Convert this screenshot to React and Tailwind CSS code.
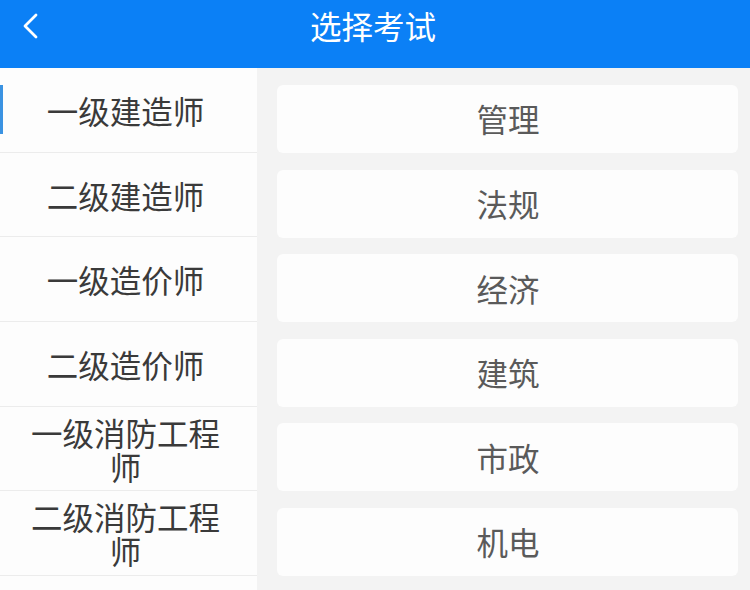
import React, { useState } from 'react';

const exams = ['一级建造师', '二级建造师', '一级造价师', '二级造价师', '一级消防工程师', '二级消防工程师', ''];
const subjects = ['管理', '法规', '经济', '建筑', '市政', '机电'];

const App = () => {
    const [active, setActive] = useState(0);

    return (
        <div
            className="w-[750px] h-[590px] overflow-hidden flex flex-col bg-[#f3f3f3]"
            style={{ fontFamily: '"Noto Sans CJK SC", "Noto Sans", sans-serif' }}
        >
            {/* 顶部标题栏 */}
            <div className="h-[68px] shrink-0 bg-[#0b80f6] flex items-center pb-[16px] relative">
                <button className="w-[60px] flex items-center justify-center">
                    <svg width="20" height="26" viewBox="0 0 20 26" fill="none">
                        <path d="M16 2 L5 13 L16 24" stroke="#ffffff" strokeWidth="2.8" strokeLinecap="round" strokeLinejoin="round" />
                    </svg>
                </button>
                <h1 className="flex-1 text-center text-white text-[31.5px] leading-none mr-[60px] ml-[-4px]">选择考试</h1>
            </div>

            <div className="flex flex-1 min-h-0">
                {/* 左侧考试列表 */}
                <div className="w-[257px] shrink-0 bg-[#fdfdfd] flex flex-col">
                    {exams.map((name, index) => (
                        <div
                            key={index}
                            onClick={() => setActive(index)}
                            className="relative h-[84.7px] shrink-0 border-b border-[#ececec] flex items-center justify-center pl-[26px] pr-[32px] text-center text-[#3a3a3a] text-[31.5px] leading-[34px]"
                        >
                            {active === index && (
                                <span className="absolute left-0 top-[17px] w-[3px] h-[49px] bg-[#3b93e2]"></span>
                            )}
                            {name}
                        </div>
                    ))}
                </div>

                {/* 右侧科目 */}
                <div className="flex-1 flex flex-col gap-[16.6px] pt-[17px] pl-[20px] pr-[12px]">
                    {subjects.map((sub) => (
                        <div
                            key={sub}
                            className="h-[68px] shrink-0 bg-[#fdfdfd] rounded-[6px] flex items-center justify-center text-[31.5px] text-[#5a5a5a] pl-[1px]"
                        >
                            {sub}
                        </div>
                    ))}
                </div>
            </div>
        </div>
    );
};

export default App;
